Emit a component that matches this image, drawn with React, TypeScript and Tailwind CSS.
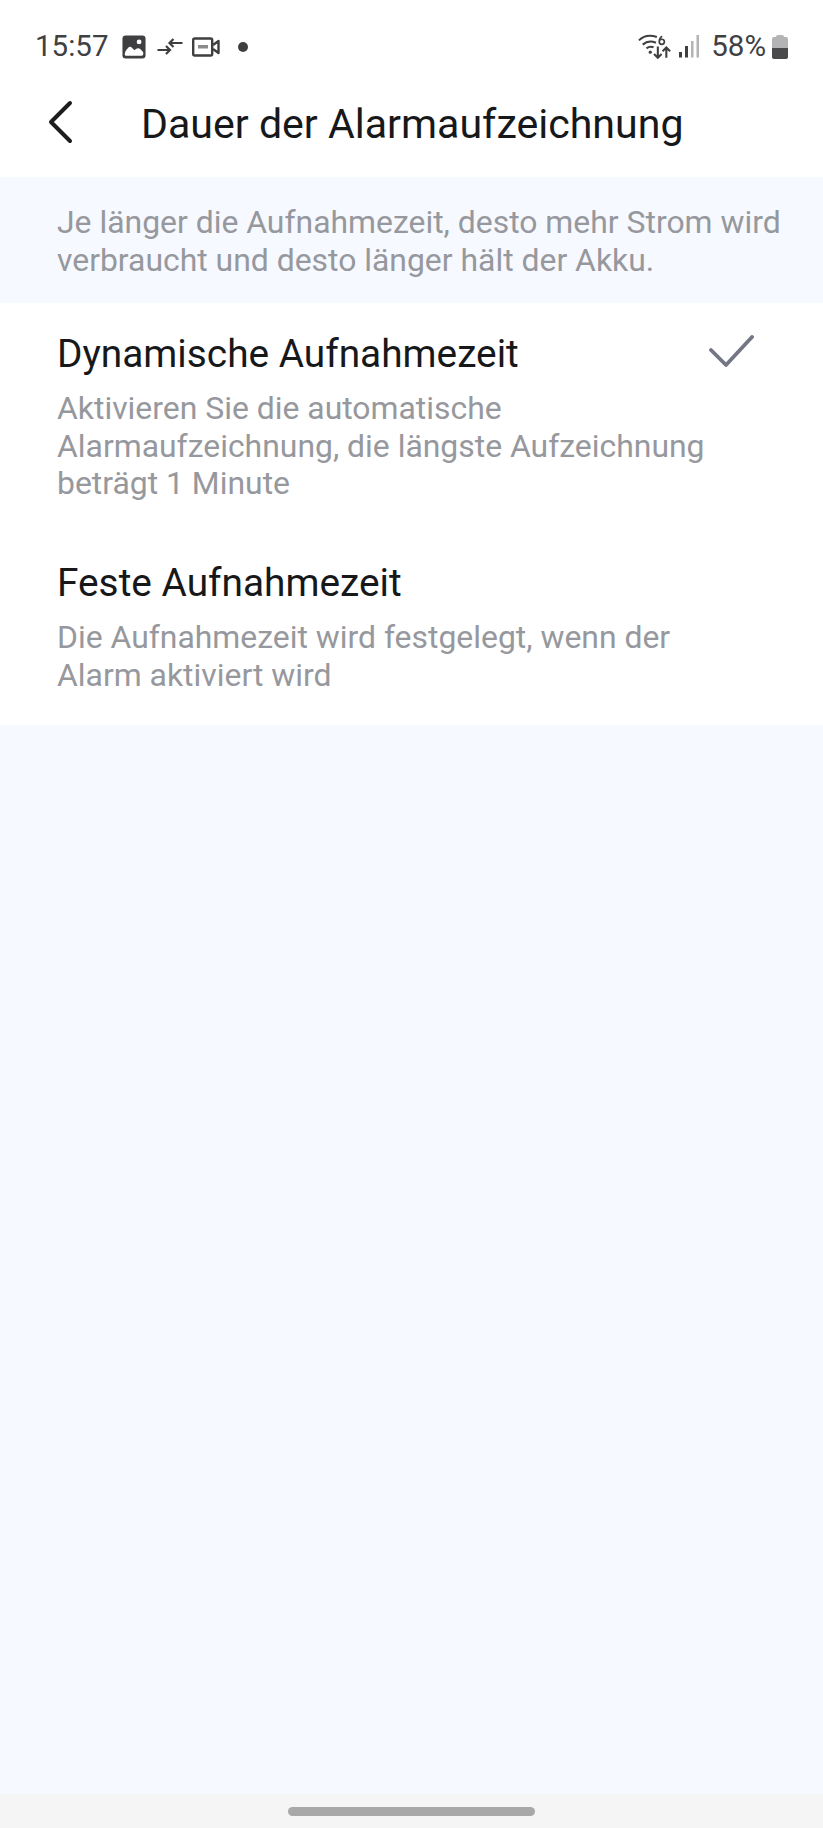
function StatusLeftIcons() {
  return (
    <div className="flex items-center">
      {/* gallery */}
      <svg width="24" height="24" viewBox="0 0 26 26" className="ml-[14px]">
        <rect x="0.5" y="0.5" width="25" height="25" rx="3.500" fill="#3f3f42" />
        <circle cx="18.500" cy="7.500" r="2.600" fill="#fff" />
        <path d="M3 21c0-3 1.500-5 3.500-7 1.500-1.600 3-1.600 4.500 0l2.500 2.600 2-1.600c1.500-1 3-1 4.200.2l3.300 3.500v2c0 1-.7 1.800-1.700 1.800H5c-1.200 0-2-.7-2-1.500z" fill="#fff" />
      </svg>
      {/* data arrows */}
      <svg width="26" height="17" viewBox="0 0 26 17" className="ml-[11px]" fill="none" stroke="#3f3f42" strokeWidth="2.200">
        <path d="M0.500 12h12M9 8l4 4-4 4" />
        <path d="M25.500 5H13M16.500 1l-4 4 4 4" />
      </svg>
      {/* video */}
      <svg width="28" height="20" viewBox="0 0 28 20" className="ml-[9px]" fill="none" stroke="#3f3f42" strokeWidth="2.400">
        <rect x="1.200" y="1.500" width="19" height="17" rx="1.500" />
        <rect x="6" y="8" width="10" height="3.500" fill="#8b8b8e" stroke="none" />
        <path d="M21 8l5.500-4v12L21 12" strokeLinejoin="round" />
      </svg>
      <span className="ml-[18px] h-[10px] w-[10px] rounded-full bg-[#3f3f42]" />
    </div>
  )
}

function StatusRightIcons() {
  return (
    <div className="flex items-center">
      {/* wifi 6 with up/down arrows */}
      <svg width="34" height="27" viewBox="0 0 36 28" fill="none" stroke="#3f3f42" strokeWidth="2.200">
        <path d="M1 7.500C6 2.500 13 1.500 20 4" />
        <path d="M5 12c4-3.500 9-4 14-2" />
        <path d="M9 16c2.500-2 5-2.200 7.500-1.200" />
        <circle cx="13" cy="20" r="1.700" fill="#3f3f42" stroke="none" />
        <path d="M25.500 3c-2.500 1.500-3 4-3 6a2.700 2.700 0 1 0 2.700-2.700c-1.500 0-2.700 1-2.700 2.700" strokeWidth="1.800" />
        <path d="M21 14v12M17 22l4 4 4-4" />
        <path d="M30 26V15M26 19l4-4 4 4" />
      </svg>
      <svg width="21" height="23" viewBox="0 0 21 23" className="ml-[6px]">
        <rect x="1" y="17" width="3" height="5.500" fill="#3f3f42" />
        <rect x="7" y="11" width="3" height="11.500" fill="#3f3f42" />
        <rect x="13" y="6" width="2.500" height="16.500" fill="#b4b4b6" />
        <rect x="18.500" y="0" width="2.500" height="22.500" fill="#b4b4b6" />
      </svg>
      <span className="ml-[12px] text-[29.500px] leading-none text-[#404043]">58%</span>
      {/* battery */}
      <div className="ml-[6px] flex h-[24px] w-[16px] flex-col items-center">
        <div className="h-[2px] w-[8px] rounded-t-sm bg-[#b4b4b6]" />
        <div className="h-[11px] w-[16px] rounded-t-[2px] bg-[#b4b4b6]" />
        <div className="h-[11px] w-[16px] rounded-b-[2px] bg-[#4a4a4d]" />
      </div>
    </div>
  )
}

function OptionRow({ title, desc, checked, className }: { title: string; desc: string[]; checked?: boolean; className: string }) {
  return (
    <div className={`flex justify-between pl-[57px] pr-[69px] ${className}`}>
      <div>
        <div className="text-[38.800px] leading-[44px] text-[#17181a]">{title}</div>
        <div className="mt-[14px] text-[31.900px] leading-[37.500px] text-[#96989d]">
          {desc.map((line) => (
            <div key={line} className="whitespace-nowrap">{line}</div>
          ))}
        </div>
      </div>
      {checked && (
        <svg width="45" height="32" viewBox="0 0 45 32" fill="none" stroke="#727685" strokeWidth="3.800" strokeLinecap="round" strokeLinejoin="round" className="mt-[3px]">
          <path d="M2 15l15 15L43 2" />
        </svg>
      )}
    </div>
  )
}

export default function App() {
  return (
    <div className="flex h-[1828px] w-[823px] flex-col bg-[#f6f9ff] font-['Roboto',sans-serif]">
      <div className="bg-white">
        <div className="flex h-[86px] items-center justify-between pl-[35px] pr-[35px] pt-[7px]">
          <div className="flex items-center">
            <span className="text-[29.500px] leading-none text-[#404043]">15:57</span>
            <StatusLeftIcons />
          </div>
          <StatusRightIcons />
        </div>
        <div className="flex h-[91px] items-start">
          <svg width="26" height="44" viewBox="0 0 26 44" fill="none" stroke="#1d1d1f" strokeWidth="4" strokeLinecap="round" strokeLinejoin="round" className="ml-[47px] mt-[14px]">
            <path d="M23 3L4 22l19 19" />
          </svg>
          <span className="ml-[68px] mt-[14px] text-[41.100px] leading-[48px] text-[#17181a]">Dauer der Alarmaufzeichnung</span>
        </div>
      </div>

      <div className="h-[126px] px-[57px] pt-[27px] text-[31.900px] leading-[37.500px] text-[#96989d]">
        <div className="whitespace-nowrap">Je länger die Aufnahmezeit, desto mehr Strom wird</div>
        <div className="whitespace-nowrap">verbraucht und desto länger hält der Akku.</div>
      </div>

      <div className="h-[422px] bg-white pt-[29px]">
        <OptionRow
          checked
          title="Dynamische Aufnahmezeit"
          desc={['Aktivieren Sie die automatische', 'Alarmaufzeichnung, die längste Aufzeichnung', 'beträgt 1 Minute']}
          className="h-[229px]"
        />
        <OptionRow
          title="Feste Aufnahmezeit"
          desc={['Die Aufnahmezeit wird festgelegt, wenn der', 'Alarm aktiviert wird']}
          className=""
        />
      </div>

      <div className="flex-1" />

      <div className="flex h-[34px] items-start justify-center bg-[#f5f5f5] pt-[13px]">
        <div className="h-[9px] w-[247px] rounded-full bg-[#a8a8a8]" />
      </div>
    </div>
  )
}
